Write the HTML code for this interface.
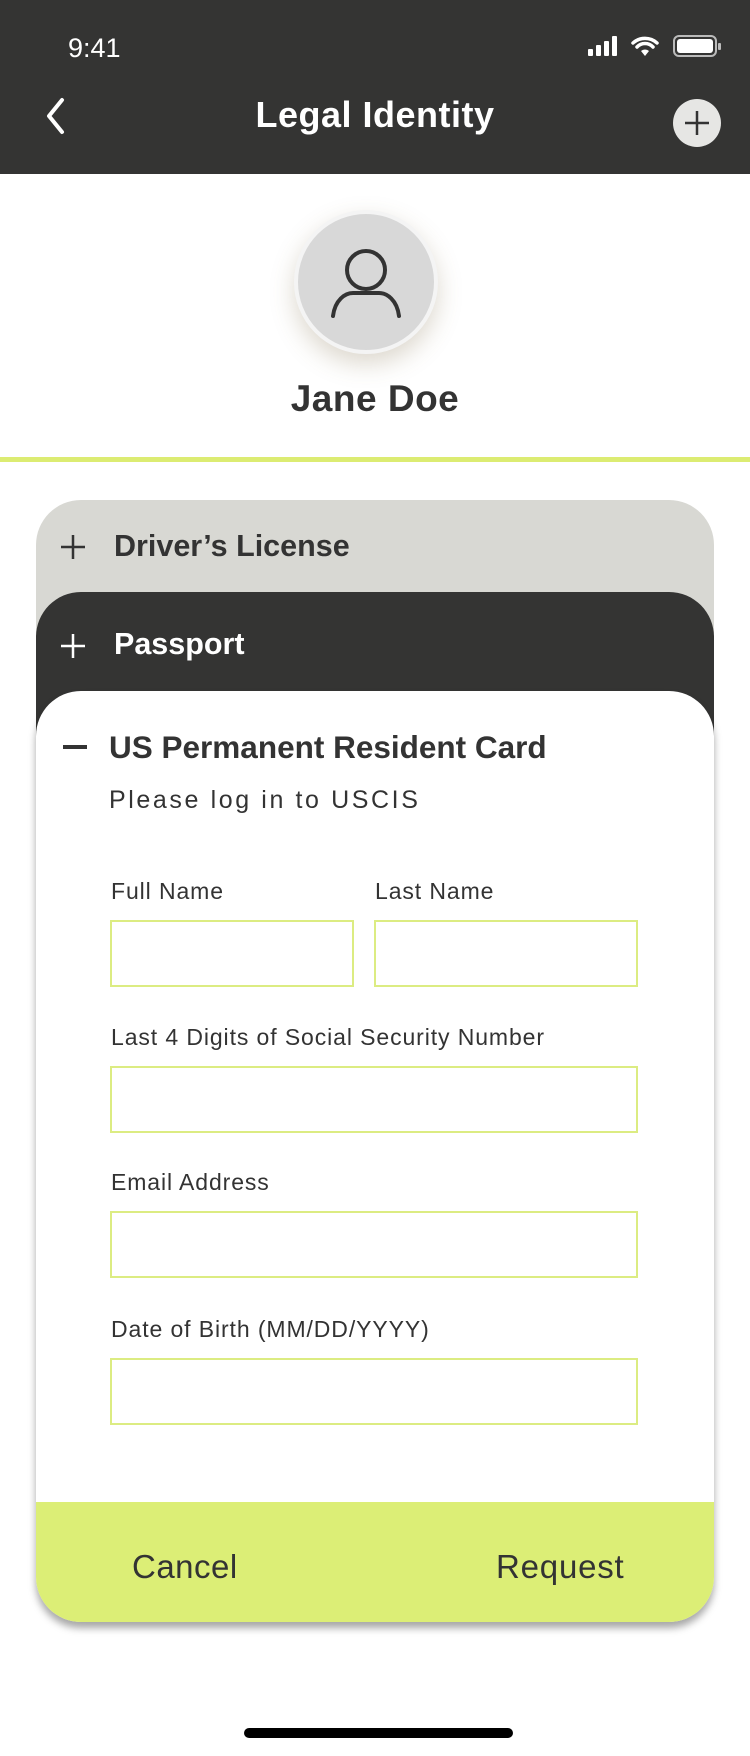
<!DOCTYPE html>
<html><head><meta charset="utf-8"><style>
*{margin:0;padding:0;box-sizing:border-box}
body{width:750px;height:1756px;background:#fff;font-family:"Liberation Sans",sans-serif;position:relative;overflow:hidden;color:#333}
.abs{position:absolute}
.hdr{left:0;top:0;width:750px;height:174px;background:#343433}
.lbl{position:absolute;left:111px;font-size:23px;color:#333;line-height:26px;letter-spacing:0.9px}
.box{position:absolute;border:2px solid #dcec82;height:67px;background:#fff}
</style></head><body>
<div class="abs hdr"></div>
<div class="abs" style="left:68px;top:33px;font-size:27px;color:#fff">9:41</div>
<svg class="abs" style="left:586px;top:34px" width="136" height="26" viewBox="0 0 136 26">
<rect x="2" y="15" width="5" height="7" rx="1" fill="#fff"/><rect x="10" y="11" width="5" height="11" rx="1" fill="#fff"/><rect x="18" y="7" width="5" height="15" rx="1" fill="#fff"/><rect x="26" y="2" width="5" height="20" rx="1" fill="#fff"/>
<path d="M47 9a18 18 0 0 1 24 0M51 13a11 11 0 0 1 16 0" stroke="#fff" stroke-width="3.5" fill="none" stroke-linecap="round"/><path d="M55 17l4 5 4-5a6 6 0 0 0-8 0z" fill="#fff"/>
<rect x="88" y="2" width="42" height="20" rx="5" fill="none" stroke="#bbb" stroke-width="2"/><rect x="91" y="5" width="36" height="14" rx="3" fill="#fff"/><rect x="132" y="9" width="3" height="7" rx="1" fill="#bbb"/>
</svg>
<svg class="abs" style="left:40px;top:96px" width="30" height="40" viewBox="0 0 30 40"><path d="M22 4L9 20l13 16" stroke="#fff" stroke-width="4" fill="none" stroke-linecap="round" stroke-linejoin="round"/></svg>
<div class="abs" style="left:0;width:750px;top:94px;text-align:center;font-size:36px;color:#fff;font-weight:bold;letter-spacing:0.5px">Legal Identity</div>
<div class="abs" style="left:673px;top:99px;width:48px;height:48px;border-radius:50%;background:#e6e6e4"></div>
<svg class="abs" style="left:673px;top:99px" width="48" height="48"><path d="M24 12v24M12 24h24" stroke="#333" stroke-width="2.5"/></svg>
<div class="abs" style="left:294px;top:210px;width:144px;height:144px;border-radius:50%;background:#d8d8d8;border:4px solid #f4f4f4;box-shadow:0 10px 24px rgba(120,100,60,0.25)"></div>
<svg class="abs" style="left:326px;top:240px" width="80" height="80" viewBox="0 0 80 80"><ellipse cx="40" cy="30" rx="19" ry="19" stroke="#333" stroke-width="4" fill="none"/><path d="M7 76c2-16 12-23 20-23h26c8 0 18 7 20 23" stroke="#333" stroke-width="4" fill="none" stroke-linecap="round"/></svg>
<div class="abs" style="left:0;width:750px;top:378px;text-align:center;font-size:37px;font-weight:bold;color:#333;letter-spacing:0.5px">Jane Doe</div>
<div class="abs" style="left:0;top:457px;width:750px;height:5px;background:#dcec72"></div>

<div class="abs" style="left:36px;top:500px;width:678px;height:240px;border-radius:45px 45px 0 0;background:#d8d8d3"></div>
<svg class="abs" style="left:58px;top:532px" width="30" height="30"><path d="M15 3v24M3 15h24" stroke="#333" stroke-width="2.5"/></svg>
<div class="abs" style="left:114px;top:529px;font-size:30.5px;font-weight:bold;color:#333">Driver’s License</div>
<div class="abs" style="left:36px;top:592px;width:678px;height:200px;border-radius:45px 45px 0 0;background:#343433"></div>
<svg class="abs" style="left:58px;top:631px" width="30" height="30"><path d="M15 3v24M3 15h24" stroke="#fff" stroke-width="2.5"/></svg>
<div class="abs" style="left:114px;top:627px;font-size:30.5px;font-weight:bold;color:#fff">Passport</div>

<div class="abs" style="left:36px;top:691px;width:678px;height:931px;border-radius:45px;background:#fff;box-shadow:0 6px 8px rgba(0,0,0,0.35);overflow:hidden">
<div class="abs" style="left:0;top:811px;width:678px;height:120px;background:#dcee76"></div>
<div class="abs" style="left:96px;top:857px;font-size:33px;color:#333;letter-spacing:0.5px">Cancel</div>
<div class="abs" style="left:460px;top:857px;font-size:33px;color:#333;letter-spacing:0.8px">Request</div>
</div>
<div class="abs" style="left:63px;top:745px;width:24px;height:4px;background:#333"></div>
<div class="abs" style="left:109px;top:729px;font-size:31.5px;font-weight:bold;color:#333">US Permanent Resident Card</div>
<div class="abs" style="left:109px;top:786px;font-size:25px;color:#333;letter-spacing:2.6px">Please log in to USCIS</div>

<div class="lbl" style="top:878px">Full Name</div>
<div class="lbl" style="top:878px;left:375px">Last Name</div>
<div class="box" style="left:110px;top:920px;width:244px"></div>
<div class="box" style="left:374px;top:920px;width:264px"></div>
<div class="lbl" style="top:1024px">Last 4 Digits of Social Security Number</div>
<div class="box" style="left:110px;top:1066px;width:528px"></div>
<div class="lbl" style="top:1169px">Email Address</div>
<div class="box" style="left:110px;top:1211px;width:528px"></div>
<div class="lbl" style="top:1316px">Date of Birth (MM/DD/YYYY)</div>
<div class="box" style="left:110px;top:1358px;width:528px"></div>

<div class="abs" style="left:244px;top:1728px;width:269px;height:10px;border-radius:5px;background:#000"></div>
</body></html>
